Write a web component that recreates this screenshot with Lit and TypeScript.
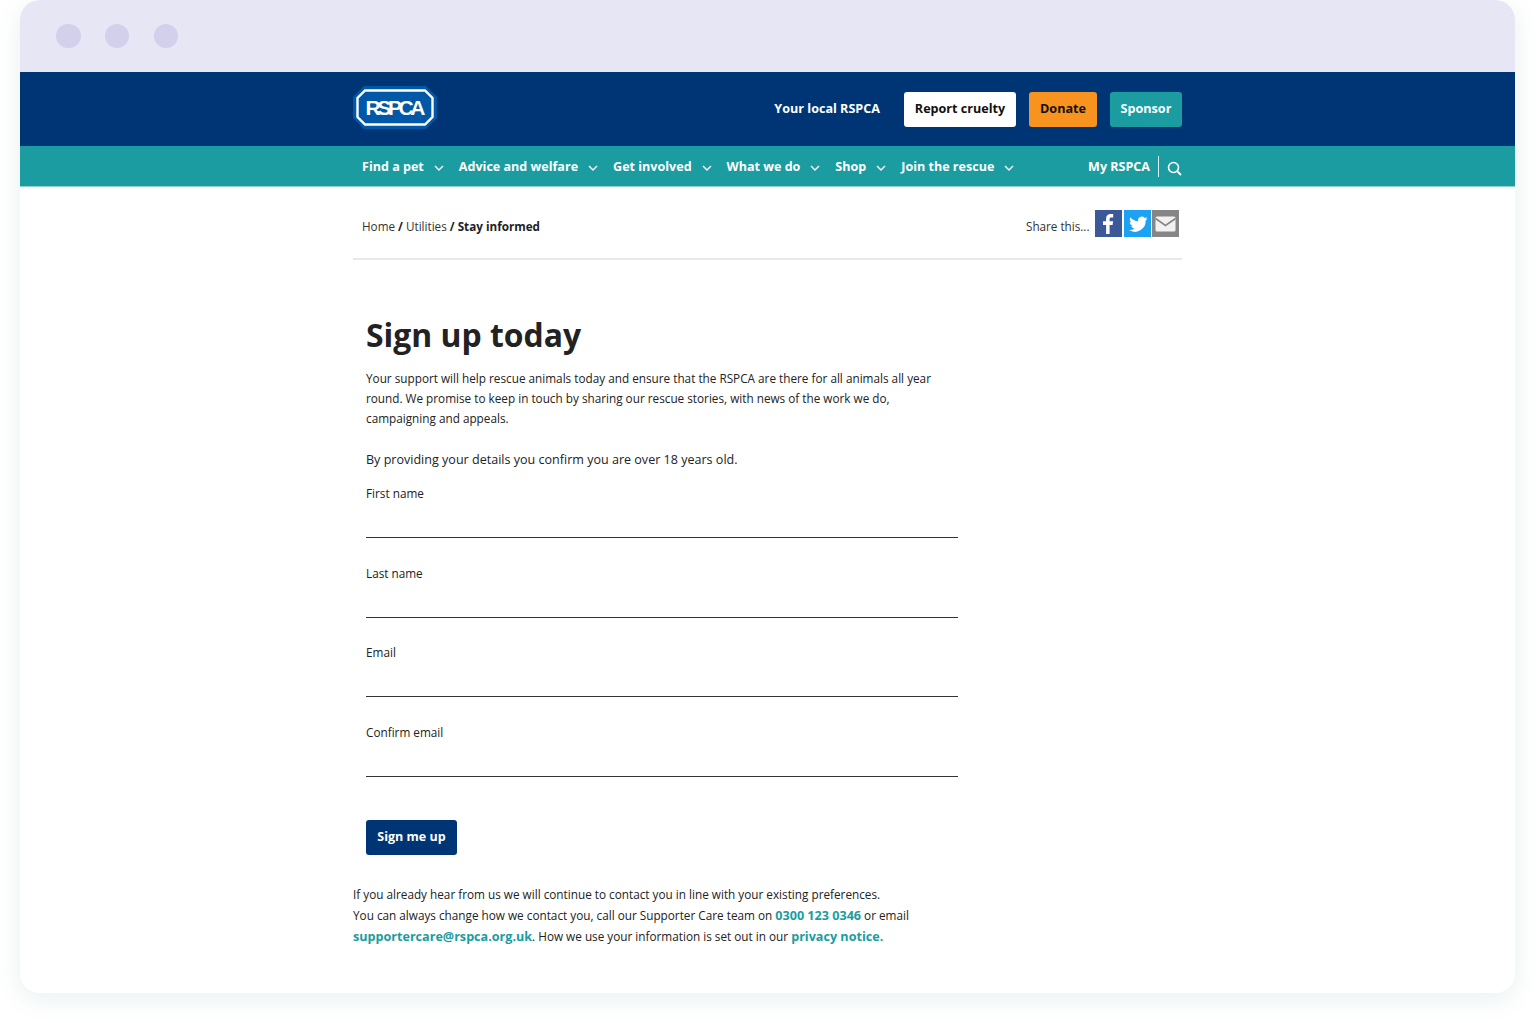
import { LitElement, html, css } from "lit";
import { customElement } from "lit/decorators.js";

const chev = html`<svg class="chev" width="10" height="6" viewBox="0 0 10 6"><path d="M1 1l4 4 4-4" fill="none" stroke="#fff" stroke-width="1.4"/></svg>`;

@customElement("app-root")
export class AppRoot extends LitElement {
  static styles = css`
    :host { display: block; height: 1023px; background: #fff; font-family: "Open Sans", sans-serif; color: #222; overflow: hidden; }
    * { box-sizing: border-box; }
    .window { position: relative; margin-left: 20px; width: 1495px; height: 993px; background: #fff; border-radius: 20px; overflow: hidden; }
    .shadow { position: absolute; left: 20px; top: 0; width: 1495px; height: 993px; border-radius: 20px; box-shadow: 0 6px 24px rgba(40, 110, 110, 0.1); pointer-events: none; }
    .titlebar { height: 72px; background: #e6e6f4; display: flex; align-items: center; gap: 24.2px; padding-left: 36.3px; }
    .dot { width: 24.5px; height: 24.5px; border-radius: 50%; background: #d3d0ec; }
    .header { height: 74px; background: #003575; }
    .wrap { width: 829px; margin: 0 auto; }
    .header .wrap { height: 74px; display: flex; align-items: center; }
    .logo { display: block; margin-top: -3px; }
    .logo text { font-family: "Liberation Sans", sans-serif; font-weight: 700; font-size: 21px; fill: #fff; }
    .top { margin-left: auto; display: flex; align-items: center; font-size: 12.6px; font-weight: 700; }
    .local { color: #fff; margin-right: 24px; margin-top: -2px; }
    .btn { height: 35px; border-radius: 3px; display: flex; align-items: center; justify-content: center; padding-bottom: 2px; }
    .report { width: 112px; background: #fff; color: #111; margin-right: 13px; }
    .donate { width: 68px; background: #f7931e; color: #111; margin-right: 13px; }
    .sponsor { width: 72px; background: #1a9ca0; color: #fff; }
    .nav { height: 41px; background: #1a9ca0; border-bottom: 1px solid #8fd0d2; }
    .nav .wrap { height: 40px; display: flex; align-items: center; padding: 1px 0 0 9px; color: #fff; font-size: 12.56px; font-weight: 700; }
    .item { display: flex; align-items: center; margin-right: 15px; white-space: nowrap; }
    .chev { margin-left: 10px; margin-top: 2px; }
    .my { margin-left: auto; padding-right: 8px; border-right: 1px solid #d8f0f0; height: 21px; line-height: 21px; }
    .search { margin: 3px 0 0 8px; display: block; }
    .crumbs { height: 73px; border-bottom: 2px solid #e8e8e8; display: flex; align-items: flex-start; padding: 23px 3px 0 9px; font-size: 11.7px; color: #333; }
    .crumbs .text { margin-top: 8px; line-height: 16px; }
    .crumbs b { color: #222; }
    .share { margin-left: auto; display: flex; align-items: flex-start; }
    .share span { margin: 8px 4px 0 0; line-height: 16px; }
    .ico { width: 27px; height: 27px; display: block; margin-left: 1.5px; }
    .form { padding-left: 13px; width: 605px; }
    h1 { margin: 52px 0 0; font-size: 31.9px; line-height: 45px; font-weight: 700; color: #222; }
    .intro { margin: 11px 0 0; font-size: 11.75px; line-height: 20px; width: 575px; color: #222; }
    .age { margin: 22px 0 0; font-size: 12.55px; line-height: 20px; color: #222; }
    .fields { margin-top: 15px; }
    .field { height: 79.5px; font-size: 11.75px; line-height: 16px; color: #222; }
    .line { height: 1px; background: #333; margin-top: 36px; width: 592px; }
    .signup { margin-top: 17px; width: 91px; height: 35px; background: #003575; color: #fff; border-radius: 3px; font-size: 12.5px; font-weight: 700; display: flex; align-items: center; justify-content: center; padding-bottom: 2px; }
    .foot { margin-top: 29px; font-size: 11.75px; line-height: 21px; color: #222; }
    .foot a { color: #1a9ca0; font-weight: 700; font-size: 12.6px; }
  `;

  render() {
    const nav = ["Find a pet", "Advice and welfare", "Get involved", "What we do", "Shop", "Join the rescue"];
    return html`
      <div class="shadow"></div>
      <div class="window">
        <div class="titlebar"><div class="dot"></div><div class="dot"></div><div class="dot"></div></div>
        <div class="header"><div class="wrap">
          <svg class="logo" width="84" height="43" viewBox="0 0 84 43">
            <path d="M11 0H73L84 11V32L73 43H11L0 32V11Z" fill="#0058a6"/>
            <path d="M12 4.500H72L79.500 12V31L72 38.500H12L4.500 31V12Z" fill="#0058a6" stroke="#fff" stroke-width="2.400"/>
            <text x="12.500" y="29" textLength="60" lengthAdjust="spacing">RSPCA</text>
          </svg>
          <div class="top">
            <span class="local">Your local RSPCA</span>
            <div class="btn report">Report cruelty</div>
            <div class="btn donate">Donate</div>
            <div class="btn sponsor">Sponsor</div>
          </div>
        </div></div>
        <div class="nav"><div class="wrap">
          ${nav.map((n) => html`<div class="item">${n}${chev}</div>`)}
          <span class="my">My RSPCA</span>
          <svg class="search" width="15" height="15" viewBox="0 0 15 15"><circle cx="6.500" cy="6.500" r="5" fill="none" stroke="#fff" stroke-width="1.600"/><path d="M10 10l4 4" stroke="#fff" stroke-width="1.800"/></svg>
        </div></div>
        <div class="wrap">
          <div class="crumbs">
            <div class="text">Home <b>/</b> Utilities <b>/ Stay informed</b></div>
            <div class="share">
              <span>Share this...</span>
              <svg class="ico" viewBox="0 0 27 27"><rect width="27" height="27" fill="#3b5998"/><path d="M14.600 24V14.900h3l.5-3.600h-3.500V9.100c0-1 .3-1.700 1.800-1.700h1.800V4.200c-.3 0-1.400-.1-2.600-.1-2.700 0-4.500 1.600-4.500 4.600v2.600H8v3.600h3.100V24z" fill="#fff"/></svg>
              <svg class="ico" viewBox="0 0 27 27"><rect width="27" height="27" fill="#1da1f2"/><path transform="translate(2.400 2.200) scale(.88)" d="M24 7.200c-.8.300-1.600.6-2.500.7.900-.5 1.600-1.400 1.900-2.400-.8.500-1.800.9-2.700 1a4.300 4.300 0 0 0-7.400 3.900C9.700 10.200 6.500 8.400 4.400 5.800c-1.100 2-.6 4.500 1.300 5.800-.7 0-1.400-.2-1.900-.5 0 2.100 1.500 3.900 3.500 4.300-.6.200-1.300.2-1.900.1.500 1.700 2.100 3 4 3A8.700 8.700 0 0 1 3 20.300 12.300 12.300 0 0 0 21.900 9.400c.9-.6 1.600-1.400 2.100-2.200z" fill="#fff"/></svg>
              <svg class="ico" viewBox="0 0 27 27"><rect width="27" height="27" fill="#868686"/><rect x="3.500" y="6.500" width="20" height="15" rx="1.500" fill="#f1f1f1"/><path d="M3.500 8.500l10 7 10-7" fill="none" stroke="#868686" stroke-width="1.600"/></svg>
            </div>
          </div>
          <div class="form">
            <h1>Sign up today</h1>
            <p class="intro">Your support will help rescue animals today and ensure that the RSPCA are there for all animals all year round. We promise to keep in touch by sharing our rescue stories, with news of the work we do, campaigning and appeals.</p>
            <p class="age">By providing your details you confirm you are over 18 years old.</p>
            <div class="fields">
              ${["First name", "Last name", "Email", "Confirm email"].map((l) => html`<div class="field">${l}<div class="line"></div></div>`)}
            </div>
            <div class="signup">Sign me up</div>
          </div>
          <div class="foot">
            If you already hear from us we will continue to contact you in line with your existing preferences.<br />
            You can always change how we contact you, call our Supporter Care team on <a>0300 123 0346</a> or email<br />
            <a>supportercare@rspca.org.uk</a>. How we use your information is set out in our <a>privacy notice.</a>
          </div>
        </div>
      </div>
    `;
  }
}
